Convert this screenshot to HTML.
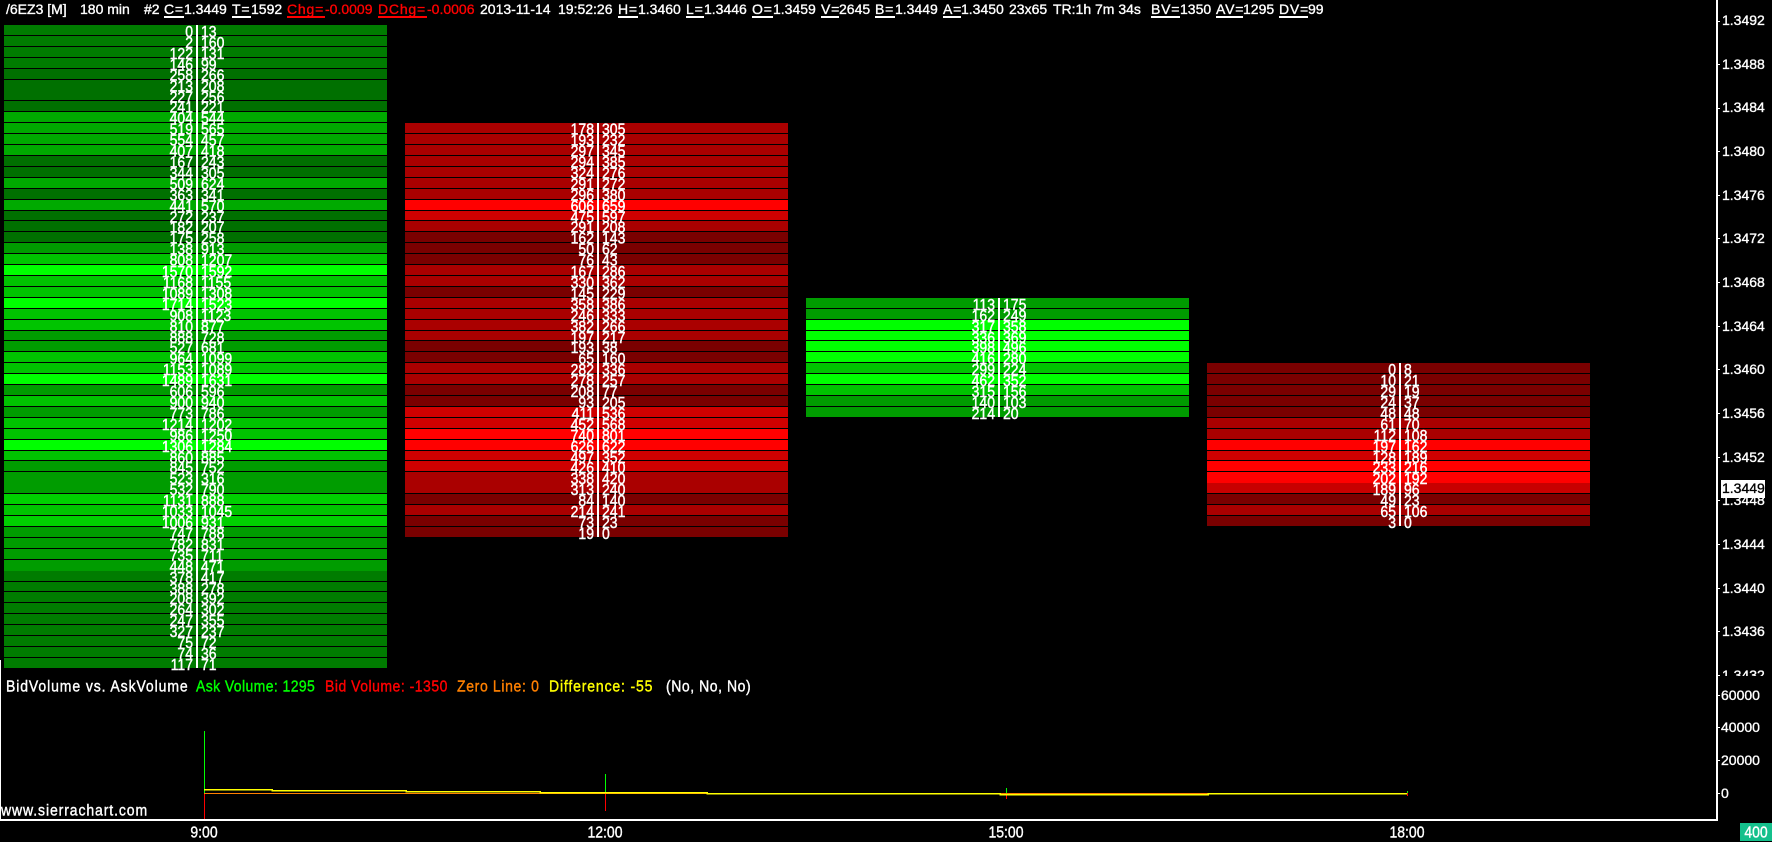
<!DOCTYPE html>
<html><head><meta charset="utf-8"><title>Chart</title>
<style>
html,body{margin:0;padding:0;background:#000;width:1772px;height:842px;overflow:hidden}
body{position:relative;font:14px/14px "Liberation Sans",Arial,sans-serif;color:#fff}
span{position:absolute;white-space:nowrap;-webkit-text-stroke:.35px currentColor}
.u{position:absolute;height:2px;top:16px;background:#fff}
.k{letter-spacing:.8px}
.R{color:#f00}
.l{position:absolute;background:#fff}
.g{transform:scaleY(1.1)}
.c{position:absolute;top:0;left:0;width:383px;height:0}
.c p{position:absolute;margin:0;left:0;width:383px;height:10px}
.c b,.c i{position:absolute;top:-1px;z-index:1;font-weight:normal;font-style:normal;line-height:14px;transform:scaleY(1.15);-webkit-text-stroke:.4px #fff;white-space:nowrap}
.c b{right:194px}
.c i{left:197px}
.c s{position:absolute;left:192px;width:2px;background:#fff;z-index:2}
.a{background:#007000}.b{background:#007c00}.cc{background:#009c00}.d{background:#00aa00}.e{background:#00c400}.f{background:#00d000}.h{background:#00ff00}
.m{background:#7a0000}.n{background:#aa0000}.o{background:#d00000}.q{background:#ff0000}
.x{width:60px;text-align:center;top:825px}
#clip{position:absolute;left:1717px;top:0;width:55px;height:676px;overflow:hidden}
#clip span{left:5px}
.t{position:absolute;left:1717px;width:3px;height:1px;background:#fff}
</style></head><body>

<span style="left:6px;top:2px">/6EZ3 [M]</span>
<span style="left:80px;top:2px">180 min</span>
<span style="left:144px;top:2px">#2</span>
<span class="k" style="left:164px;top:2px">C=</span><div class="u" style="left:164px;width:20px"></div><span style="left:184px;top:2px">1.3449</span>
<span class="k" style="left:232px;top:2px">T=</span><div class="u" style="left:232px;width:19px"></div><span style="left:251px;top:2px">1592</span>
<span class="k R" style="left:287px;top:2px">Chg=</span><div class="u" style="left:287px;width:38px;background:#f00"></div><span class="R" style="left:325px;top:2px">-0.0009</span>
<span class="k R" style="left:378px;top:2px">DChg=</span><div class="u" style="left:378px;width:49px;background:#f00"></div><span class="R" style="left:427px;top:2px">-0.0006</span>
<span style="left:480px;top:2px">2013-11-14</span>
<span style="left:558px;top:2px">19:52:26</span>
<span class="k" style="left:618px;top:2px">H=</span><div class="u" style="left:618px;width:20px"></div><span style="left:638px;top:2px">1.3460</span>
<span class="k" style="left:686px;top:2px">L=</span><div class="u" style="left:686px;width:18px"></div><span style="left:704px;top:2px">1.3446</span>
<span class="k" style="left:752px;top:2px">O=</span><div class="u" style="left:752px;width:21px"></div><span style="left:773px;top:2px">1.3459</span>
<span class="k" style="left:821px;top:2px">V=</span><div class="u" style="left:821px;width:18px"></div><span style="left:839px;top:2px">2645</span>
<span class="k" style="left:875px;top:2px">B=</span><div class="u" style="left:875px;width:20px"></div><span style="left:895px;top:2px">1.3449</span>
<span class="k" style="left:943px;top:2px">A=</span><div class="u" style="left:943px;width:18px"></div><span style="left:961px;top:2px">1.3450</span>
<span style="left:1009px;top:2px">23x65</span>
<span style="left:1053px;top:2px">TR:1h 7m 34s</span>
<span class="k" style="left:1151px;top:2px">BV=</span><div class="u" style="left:1151px;width:29px"></div><span style="left:1180px;top:2px">1350</span>
<span class="k" style="left:1216px;top:2px">AV=</span><div class="u" style="left:1216px;width:27px"></div><span style="left:1243px;top:2px">1295</span>
<span class="k" style="left:1279px;top:2px">DV=</span><div class="u" style="left:1279px;width:29px"></div><span style="left:1308px;top:2px">99</span>

<div class="c" style="left:4px"><s style="top:25px;height:643px"></s>
<p class="b" style="top:25px"><b>0</b><i>13</i></p>
<p class="b" style="top:36px"><b>2</b><i>160</i></p>
<p class="b" style="top:47px"><b>122</b><i>131</i></p>
<p class="b" style="top:58px"><b>146</b><i>99</i></p>
<p class="a" style="top:69px"><b>258</b><i>266</i></p>
<p class="a" style="top:80px;height:11px"><b>213</b><i>208</i></p>
<p class="a" style="top:91px;height:9px"><b>227</b><i>256</i></p>
<p class="a" style="top:101px"><b>241</b><i>221</i></p>
<p class="d" style="top:112px"><b>404</b><i>544</i></p>
<p class="d" style="top:123px"><b>519</b><i>565</i></p>
<p class="d" style="top:134px"><b>554</b><i>457</i></p>
<p class="d" style="top:145px"><b>407</b><i>418</i></p>
<p class="a" style="top:156px"><b>167</b><i>243</i></p>
<p class="a" style="top:167px"><b>344</b><i>305</i></p>
<p class="d" style="top:178px"><b>509</b><i>624</i></p>
<p class="a" style="top:189px"><b>363</b><i>341</i></p>
<p class="d" style="top:200px"><b>441</b><i>570</i></p>
<p class="a" style="top:211px;height:9px"><b>272</b><i>237</i></p>
<p class="a" style="top:221px"><b>182</b><i>207</i></p>
<p class="a" style="top:232px"><b>175</b><i>258</i></p>
<p class="cc" style="top:243px"><b>138</b><i>913</i></p>
<p class="e" style="top:254px"><b>808</b><i>1207</i></p>
<p class="h" style="top:265px"><b>1570</b><i>1592</i></p>
<p class="e" style="top:276px"><b>1168</b><i>1155</i></p>
<p class="e" style="top:287px"><b>1089</b><i>1308</i></p>
<p class="h" style="top:298px"><b>1714</b><i>1523</i></p>
<p class="e" style="top:309px"><b>908</b><i>1123</i></p>
<p class="e" style="top:320px"><b>810</b><i>877</i></p>
<p class="cc" style="top:331px;height:9px"><b>888</b><i>728</i></p>
<p class="cc" style="top:341px"><b>527</b><i>681</i></p>
<p class="e" style="top:352px"><b>964</b><i>1099</i></p>
<p class="e" style="top:363px"><b>1153</b><i>1089</i></p>
<p class="h" style="top:374px"><b>1489</b><i>1631</i></p>
<p class="cc" style="top:385px"><b>606</b><i>596</i></p>
<p class="e" style="top:396px"><b>900</b><i>940</i></p>
<p class="cc" style="top:407px"><b>773</b><i>786</i></p>
<p class="e" style="top:418px"><b>1214</b><i>1202</i></p>
<p class="e" style="top:429px"><b>986</b><i>1250</i></p>
<p class="h" style="top:440px"><b>1306</b><i>1284</i></p>
<p class="e" style="top:451px;height:9px"><b>860</b><i>885</i></p>
<p class="cc" style="top:461px"><b>845</b><i>752</i></p>
<p class="cc" style="top:472px;height:11px"><b>523</b><i>316</i></p>
<p class="cc" style="top:483px"><b>532</b><i>790</i></p>
<p class="f" style="top:494px"><b>1131</b><i>888</i></p>
<p class="e" style="top:505px"><b>1033</b><i>1045</i></p>
<p class="f" style="top:516px"><b>1006</b><i>931</i></p>
<p class="cc" style="top:527px"><b>747</b><i>788</i></p>
<p class="cc" style="top:538px"><b>782</b><i>831</i></p>
<p class="cc" style="top:549px"><b>735</b><i>711</i></p>
<p class="cc" style="top:560px;height:11px"><b>448</b><i>471</i></p>
<p class="b" style="top:571px"><b>378</b><i>417</i></p>
<p class="b" style="top:582px;height:9px"><b>388</b><i>278</i></p>
<p class="b" style="top:592px"><b>208</b><i>392</i></p>
<p class="b" style="top:603px"><b>264</b><i>302</i></p>
<p class="b" style="top:614px"><b>247</b><i>355</i></p>
<p class="b" style="top:625px"><b>327</b><i>237</i></p>
<p class="b" style="top:636px"><b>75</b><i>72</i></p>
<p class="b" style="top:647px"><b>74</b><i>36</i></p>
<p class="b" style="top:658px"><b>117</b><i>71</i></p>
</div>

<div class="c" style="left:405px"><s style="top:123px;height:414px"></s>
<p class="n" style="top:123px"><b>178</b><i>305</i></p>
<p class="n" style="top:134px"><b>193</b><i>232</i></p>
<p class="n" style="top:145px"><b>297</b><i>345</i></p>
<p class="n" style="top:156px"><b>294</b><i>385</i></p>
<p class="n" style="top:167px"><b>324</b><i>276</i></p>
<p class="n" style="top:178px"><b>291</b><i>272</i></p>
<p class="n" style="top:189px"><b>296</b><i>380</i></p>
<p class="q" style="top:200px"><b>606</b><i>659</i></p>
<p class="o" style="top:211px;height:9px"><b>475</b><i>597</i></p>
<p class="n" style="top:221px"><b>291</b><i>208</i></p>
<p class="m" style="top:232px"><b>162</b><i>143</i></p>
<p class="m" style="top:243px"><b>50</b><i>62</i></p>
<p class="m" style="top:254px"><b>76</b><i>43</i></p>
<p class="n" style="top:265px"><b>167</b><i>286</i></p>
<p class="n" style="top:276px"><b>330</b><i>362</i></p>
<p class="m" style="top:287px"><b>145</b><i>229</i></p>
<p class="n" style="top:298px"><b>358</b><i>386</i></p>
<p class="n" style="top:309px"><b>246</b><i>333</i></p>
<p class="n" style="top:320px"><b>382</b><i>266</i></p>
<p class="n" style="top:331px;height:9px"><b>197</b><i>217</i></p>
<p class="m" style="top:341px"><b>193</b><i>38</i></p>
<p class="m" style="top:352px"><b>65</b><i>160</i></p>
<p class="n" style="top:363px"><b>282</b><i>336</i></p>
<p class="n" style="top:374px"><b>278</b><i>257</i></p>
<p class="m" style="top:385px"><b>208</b><i>77</i></p>
<p class="m" style="top:396px"><b>93</b><i>205</i></p>
<p class="o" style="top:407px"><b>411</b><i>536</i></p>
<p class="o" style="top:418px"><b>452</b><i>568</i></p>
<p class="q" style="top:429px"><b>740</b><i>801</i></p>
<p class="q" style="top:440px"><b>626</b><i>622</i></p>
<p class="o" style="top:451px;height:9px"><b>497</b><i>352</i></p>
<p class="o" style="top:461px"><b>426</b><i>410</i></p>
<p class="n" style="top:472px;height:11px"><b>338</b><i>420</i></p>
<p class="n" style="top:483px"><b>313</b><i>240</i></p>
<p class="m" style="top:494px"><b>84</b><i>140</i></p>
<p class="n" style="top:505px"><b>214</b><i>241</i></p>
<p class="m" style="top:516px"><b>73</b><i>23</i></p>
<p class="m" style="top:527px"><b>19</b><i>0</i></p>
</div>

<div class="c" style="left:806px"><s style="top:298px;height:119px"></s>
<p class="cc" style="top:298px"><b>113</b><i>175</i></p>
<p class="cc" style="top:309px"><b>162</b><i>249</i></p>
<p class="h" style="top:320px"><b>317</b><i>358</i></p>
<p class="h" style="top:331px;height:9px"><b>336</b><i>369</i></p>
<p class="h" style="top:341px"><b>398</b><i>496</i></p>
<p class="h" style="top:352px"><b>416</b><i>280</i></p>
<p class="e" style="top:363px"><b>299</b><i>224</i></p>
<p class="h" style="top:374px"><b>462</b><i>352</i></p>
<p class="e" style="top:385px"><b>315</b><i>156</i></p>
<p class="cc" style="top:396px"><b>140</b><i>103</i></p>
<p class="cc" style="top:407px"><b>214</b><i>20</i></p>
</div>

<div class="c" style="left:1207px"><s style="top:363px;height:163px"></s>
<p class="m" style="top:363px"><b>0</b><i>8</i></p>
<p class="m" style="top:374px"><b>10</b><i>21</i></p>
<p class="m" style="top:385px"><b>29</b><i>19</i></p>
<p class="m" style="top:396px"><b>24</b><i>37</i></p>
<p class="m" style="top:407px"><b>48</b><i>48</i></p>
<p class="n" style="top:418px"><b>61</b><i>70</i></p>
<p class="n" style="top:429px"><b>112</b><i>108</i></p>
<p class="q" style="top:440px"><b>197</b><i>162</i></p>
<p class="o" style="top:451px;height:9px"><b>128</b><i>189</i></p>
<p class="q" style="top:461px"><b>233</b><i>216</i></p>
<p class="q" style="top:472px;height:11px"><b>202</b><i>192</i></p>
<p style="top:483px;background:#c80000"><b>189</b><i>96</i></p>
<p class="m" style="top:494px"><b>49</b><i>23</i></p>
<p class="n" style="top:505px"><b>65</b><i>106</i></p>
<p class="m" style="top:516px"><b>3</b><i>0</i></p>
</div>

<!-- price axis -->
<div class="l" style="left:1716px;top:0;width:2px;height:820px"></div>
<div id="clip">
<span style="top:13px">1.3492</span>
<span style="top:57px">1.3488</span>
<span style="top:100px">1.3484</span>
<span style="top:144px">1.3480</span>
<span style="top:188px">1.3476</span>
<span style="top:231px">1.3472</span>
<span style="top:275px">1.3468</span>
<span style="top:319px">1.3464</span>
<span style="top:362px">1.3460</span>
<span style="top:406px">1.3456</span>
<span style="top:450px">1.3452</span>
<span style="top:493px">1.3448</span>
<span style="top:537px">1.3444</span>
<span style="top:581px">1.3440</span>
<span style="top:624px">1.3436</span>
<span style="top:668px">1.3432</span>
</div>
<div class="t" style="top:21px"></div><div class="t" style="top:64px"></div><div class="t" style="top:108px"></div><div class="t" style="top:151px"></div>
<div class="t" style="top:195px"></div><div class="t" style="top:238px"></div><div class="t" style="top:282px"></div><div class="t" style="top:326px"></div>
<div class="t" style="top:369px"></div><div class="t" style="top:413px"></div><div class="t" style="top:457px"></div><div class="t" style="top:500px"></div>
<div class="t" style="top:544px"></div><div class="t" style="top:588px"></div><div class="t" style="top:631px"></div><div class="t" style="top:675px"></div>
<div class="l" style="left:1721px;top:480px;width:44px;height:18px"></div>
<span style="left:1722px;top:481px;color:#000">1.3449</span>

<!-- legend -->
<span class="g" style="left:6px;top:679px;letter-spacing:.9px">BidVolume vs. AskVolume</span>
<span class="g" style="left:196px;top:679px;color:#0f0;letter-spacing:.4px">Ask Volume: 1295</span>
<span class="g" style="left:325px;top:679px;color:#f00;letter-spacing:.5px">Bid Volume: -1350</span>
<span class="g" style="left:457px;top:679px;color:#ff8000;letter-spacing:.65px">Zero Line: 0</span>
<span class="g" style="left:549px;top:679px;color:#ff0;letter-spacing:.85px">Difference: -55</span>
<span class="g" style="left:666px;top:679px;letter-spacing:.55px">(No, No, No)</span>
<span class="g" style="left:1px;top:803px;letter-spacing:.9px">www.sierrachart.com</span>

<!-- lower pane -->
<svg width="1772" height="842" style="position:absolute;left:0;top:0" shape-rendering="crispEdges">
<path d="M204.5 731V793" stroke="#0f0"/><path d="M204.5 793V819" stroke="#f00"/>
<path d="M605.5 774V793" stroke="#0f0"/><path d="M605.5 793V811" stroke="#f00"/>
<path d="M1006.5 788V793" stroke="#0f0"/><path d="M1006.5 793V799" stroke="#f00"/>
<path d="M1407.5 791V793" stroke="#0f0"/><path d="M1407.5 793V796" stroke="#f00"/>
<path d="M204 793.5H1208" stroke="#ff8000"/>
<path d="M204 789.5H272V790.5H406V791.5H540V792.5H707V793.5H1000V794.5H1208V793.5H1407" fill="none" stroke="#ff0" stroke-width="1.5"/>
<path d="M1717 695.5h3M1717 727.5h3M1717 760.5h3M1717 793.5h3" stroke="#fff"/>
</svg>
<div class="l" style="left:0;top:660px;width:1px;height:160px"></div>
<div class="l" style="left:0;top:819px;width:1718px;height:1.5px"></div>
<span style="left:1721px;top:688px">60000</span>
<span style="left:1721px;top:720px">40000</span>
<span style="left:1721px;top:753px">20000</span>
<span style="left:1721px;top:786px">0</span>
<span class="x g" style="left:174px">9:00</span>
<span class="x g" style="left:575px">12:00</span>
<span class="x g" style="left:976px">15:00</span>
<span class="x g" style="left:1377px">18:00</span>
<div class="l" style="left:1740px;top:823px;width:32px;height:18px;background:#14c08c"></div>
<span class="g" style="left:1740px;top:825px;width:32px;text-align:center">400</span>
</body></html>
